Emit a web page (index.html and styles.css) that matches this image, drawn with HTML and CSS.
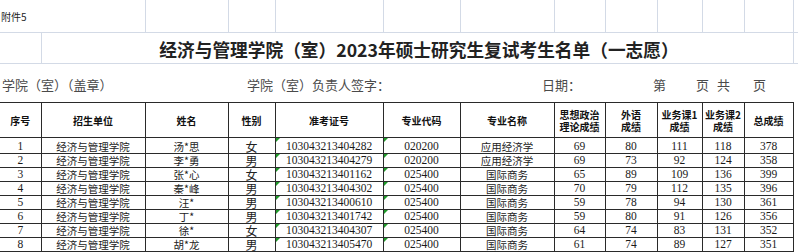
FILE: index.html
```html
<!DOCTYPE html>
<html lang="zh-CN">
<head>
<meta charset="utf-8">
<title>经济与管理学院（室）2023年硕士研究生复试考生名单（一志愿）</title>
<link rel="stylesheet" href="styles.css">
</head>
<body>
<div class="frame">
<table class="sheet">
  <colgroup>
    <col class="w-a"><col class="w-b"><col class="w-c"><col class="w-d"><col class="w-e"><col class="w-f"><col class="w-g"><col class="w-h"><col class="w-i"><col class="w-j"><col class="w-k"><col class="w-l"><col class="w-m">
  </colgroup>
  <tr class="r-top">
    <td colspan="2" class="g g-nl attach">附件5</td>
    <td class="g"></td><td class="g"></td><td class="g"></td><td class="g"></td><td class="g"></td><td class="g"></td><td class="g"></td><td class="g"></td><td class="g"></td><td class="g"></td><td class="g g-nr"></td>
  </tr>
  <tr class="r-title">
    <td class="g g-nl"></td>
    <td colspan="11" class="g title">经济与管理学院（室）2023年硕士研究生复试考生名单（一志愿）</td>
    <td class="g g-nr"></td>
  </tr>
  <tr class="r-sign">
    <td colspan="13" class="sign-cell">
      <div class="sign">
        <span>学院（室）（盖章）</span>
        <span>学院（室）负责人签字：</span>
        <span>日期：</span>
        <span>第</span>
        <span>页</span>
        <span>共</span>
        <span>页</span>
      </div>
    </td>
  </tr>
  <tr class="r-head">
    <th class="nl">序号</th>
    <th>招生单位</th>
    <th>姓名</th>
    <th>性别</th>
    <th>准考证号</th>
    <th>专业代码</th>
    <th>专业名称</th>
    <th>思想政治<br>理论成绩</th>
    <th>外语<br>成绩</th>
    <th>业务课1<br>成绩</th>
    <th>业务课2<br>成绩</th>
    <th>总成绩</th>
    <th class="edge"></th>
  </tr>
  <tr class="r-data first">
    <td class="nl">1</td><td class="zh">经济与管理学院</td><td class="zh">汤*思</td><td class="zh big">女</td><td class="tx">103043213404282</td><td class="tx">020200</td><td class="zh">应用经济学</td><td>69</td><td>80</td><td>111</td><td>118</td><td>378</td><td class="edge"></td>
  </tr>
  <tr class="r-data">
    <td class="nl">2</td><td class="zh">经济与管理学院</td><td class="zh">李*勇</td><td class="zh big">男</td><td class="tx">103043213404279</td><td class="tx">020200</td><td class="zh">应用经济学</td><td>69</td><td>73</td><td>92</td><td>124</td><td>358</td><td class="edge"></td>
  </tr>
  <tr class="r-data">
    <td class="nl">3</td><td class="zh">经济与管理学院</td><td class="zh">张*心</td><td class="zh big">女</td><td class="tx">103043213401162</td><td class="tx">025400</td><td class="zh">国际商务</td><td>65</td><td>89</td><td>109</td><td>136</td><td>399</td><td class="edge"></td>
  </tr>
  <tr class="r-data">
    <td class="nl">4</td><td class="zh">经济与管理学院</td><td class="zh">秦*峰</td><td class="zh big">男</td><td class="tx">103043213404302</td><td class="tx">025400</td><td class="zh">国际商务</td><td>70</td><td>79</td><td>112</td><td>135</td><td>396</td><td class="edge"></td>
  </tr>
  <tr class="r-data">
    <td class="nl">5</td><td class="zh">经济与管理学院</td><td class="zh">汪*</td><td class="zh big">男</td><td class="tx">103043213400610</td><td class="tx">025400</td><td class="zh">国际商务</td><td>59</td><td>78</td><td>94</td><td>130</td><td>361</td><td class="edge"></td>
  </tr>
  <tr class="r-data">
    <td class="nl">6</td><td class="zh">经济与管理学院</td><td class="zh">丁*</td><td class="zh big">男</td><td class="tx">103043213401742</td><td class="tx">025400</td><td class="zh">国际商务</td><td>59</td><td>80</td><td>91</td><td>126</td><td>356</td><td class="edge"></td>
  </tr>
  <tr class="r-data">
    <td class="nl">7</td><td class="zh">经济与管理学院</td><td class="zh">徐*</td><td class="zh big">女</td><td class="tx">103043213404307</td><td class="tx">025400</td><td class="zh">国际商务</td><td>64</td><td>74</td><td>83</td><td>131</td><td>352</td><td class="edge"></td>
  </tr>
  <tr class="r-data">
    <td class="nl">8</td><td class="zh">经济与管理学院</td><td class="zh">胡*龙</td><td class="zh big">男</td><td class="tx">103043213405470</td><td class="tx">025400</td><td class="zh">国际商务</td><td>61</td><td>74</td><td>89</td><td>127</td><td>351</td><td class="edge"></td>
  </tr>
  <tr class="r-data">
    <td class="nl"></td><td class="zh"></td><td class="zh"></td><td class="zh big"></td><td class="tx"></td><td class="tx"></td><td class="zh"></td><td></td><td></td><td></td><td></td><td></td><td class="edge"></td>
  </tr>
</table>
</div>
</body>
</html>
```
FILE: styles.css
```css
html, body {
  margin: 0;
  padding: 0;
  background: #ffffff;
}

.frame {
  width: 798px;
  height: 252px;
  overflow: hidden;
}

.sheet {
  border-collapse: collapse;
  table-layout: fixed;
  width: 798px;
  font-family: "Liberation Serif", "Noto Sans CJK SC", serif;
  color: #1a1a1a;
}

.w-a { width: 41px; }
.w-b { width: 104px; }
.w-c { width: 83px; }
.w-d { width: 47px; }
.w-e { width: 108px; }
.w-f { width: 77px; }
.w-g { width: 94px; }
.w-h { width: 51px; }
.w-i { width: 52px; }
.w-j { width: 45px; }
.w-k { width: 42px; }
.w-l { width: 49px; }
.w-m { width: 5px; }

td, th {
  padding: 0;
  overflow: hidden;
  white-space: nowrap;
}

/* light spreadsheet gridlines in the upper area */
.g {
  border: 1px solid #d3dae6;
}
.g-nl {
  border-left: none;
}
.g-nr {
  border-right: none;
}

.r-top td {
  height: 31px;
  border-top: none;
}
.attach {
  font-family: "Noto Sans CJK SC", sans-serif;
  font-size: 10px;
  line-height: 12px;
  color: #222;
  padding-left: 1px;
  vertical-align: middle;
  padding-top: 1px;
}

.r-title td {
  height: 29px;
}
.title {
  text-align: center;
  vertical-align: middle;
  font-family: "Noto Sans CJK SC", sans-serif;
  font-weight: 700;
  font-size: 17.7px;
  line-height: 20px;
  color: #222;
  padding-top: 1px;
  padding-left: 4px;
}

.r-sign td {
  height: 38px;
}
.sign-cell {
  vertical-align: middle;
}
.sign {
  display: grid;
  grid-template-columns: 245px 295px 111px 43px 21px 36px auto;
  padding-left: 2px;
  font-family: "Noto Sans CJK SC", sans-serif;
  font-size: 13px;
  color: #4a4a4a;
  line-height: 16px;
  padding-top: 3px;
}

/* table proper */
.r-head th,
.r-data td {
  border: 1px solid #2a2a2a;
  text-align: center;
  vertical-align: middle;
}
.r-head th.nl,
.r-data td.nl {
  border-left: none;
}
.r-head th.edge,
.r-data td.edge {
  border-right: none;
  border-bottom: none;
  border-top: none;
}

.r-head th {
  height: 33px;
  font-family: "Noto Sans CJK SC", sans-serif;
  font-weight: 700;
  font-size: 10px;
  line-height: 12px;
  color: #111;
  padding-top: 1px;
}

.r-data td {
  height: 13px;
  font-size: 11.5px;
  line-height: 13px;
  padding-top: 0;
}
.r-data.first td {
  height: 14px;
  padding-top: 1px;
}
.r-data td.zh {
  font-family: "Noto Sans CJK SC", sans-serif;
  font-size: 10.5px;
  color: #222;
}
.r-data td.zh.big {
  font-size: 12px;
}
.r-data td.tx {
  position: relative;
}
.r-data td.tx::before {
  content: "";
  position: absolute;
  left: 0;
  top: 0;
  width: 0;
  height: 0;
  border-top: 4px solid #1f9a2a;
  border-right: 4px solid transparent;
}
```
